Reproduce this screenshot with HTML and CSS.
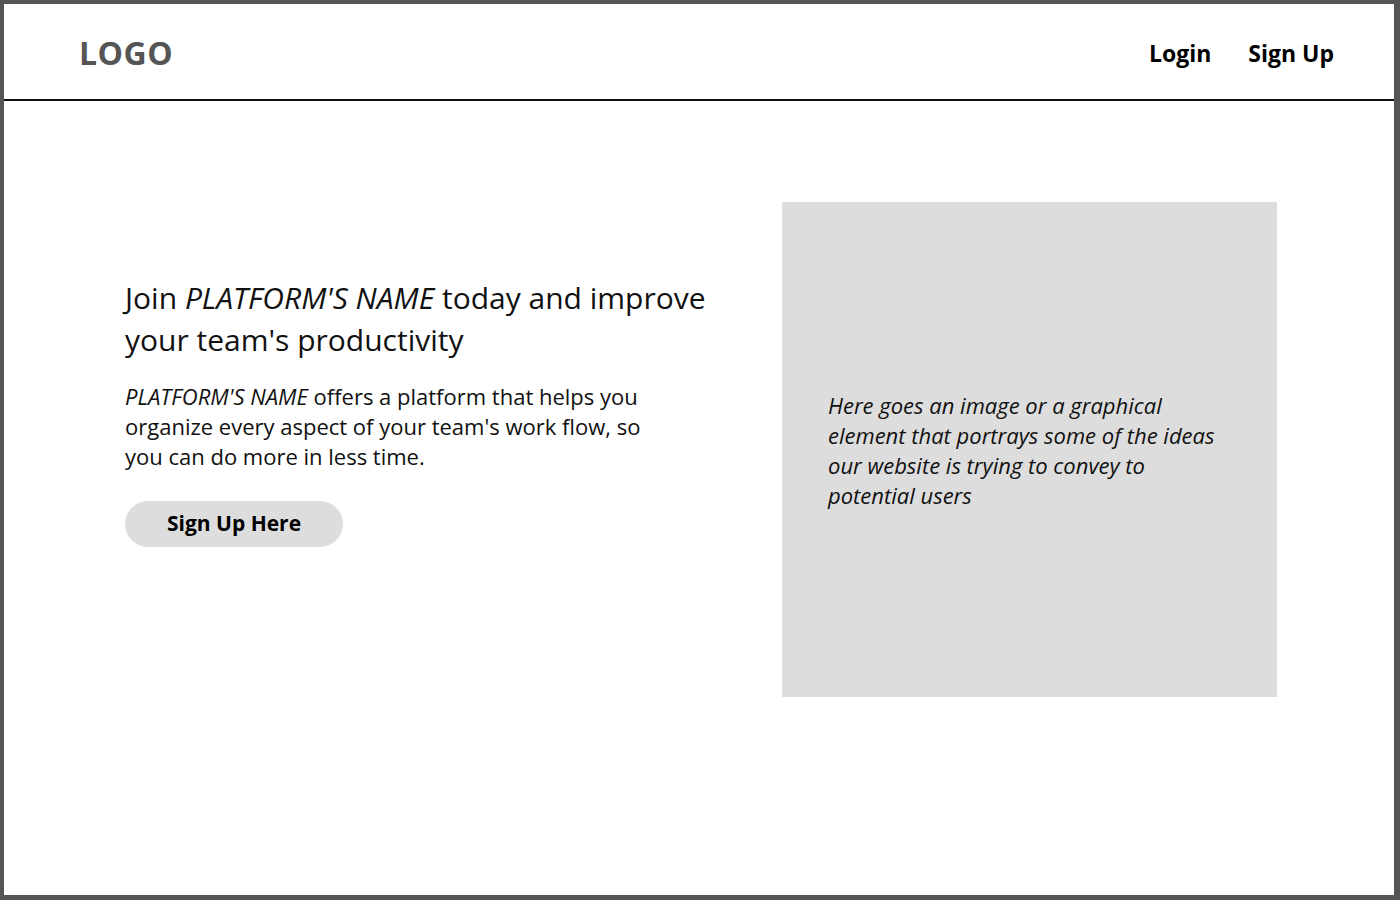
FILE: index.html
```html
<!DOCTYPE html>
<html lang="en">
<head>
<meta charset="utf-8">
<title>Landing</title>
<link rel="stylesheet" href="styles.css">
</head>
<body>
<div class="frame">
  <header class="header">
    <div class="logo">LOGO</div>
    <nav class="nav">
      <a class="nav-link" href="#">Login</a>
      <a class="nav-link" href="#">Sign Up</a>
    </nav>
  </header>
  <main class="hero">
    <section class="intro">
      <h1 class="title">Join <em>PLATFORM'S NAME</em> today and improve your team's productivity</h1>
      <p class="lead"><em>PLATFORM'S NAME</em> offers a platform that helps you organize every aspect of your team's work flow, so you can do more in less time.</p>
      <a class="cta" href="#">Sign Up Here</a>
    </section>
    <div class="visual">
      <p class="visual-text">Here goes an image or a graphical element that portrays some of the ideas our website is trying to convey to potential users</p>
    </div>
  </main>
</div>
</body>
</html>
```

FILE: styles.css
```css
* { box-sizing: border-box; }

html, body {
  margin: 0;
  padding: 0;
  background: #ffffff;
}

body {
  font-family: "Open Sans", "Liberation Sans", sans-serif;
  color: #111;
}

.frame {
  width: 1400px;
  height: 900px;
  border-style: solid;
  border-color: #555555;
  border-width: 4px 6px 5px 4px;
  background: #fff;
  display: flex;
  flex-direction: column;
}

.header {
  height: 97px;
  flex: none;
  display: flex;
  align-items: center;
  justify-content: space-between;
  padding: 2px 60px 0 75px;
  border-bottom: 2px solid #111;
}

.logo {
  font-size: 32px;
  font-weight: 700;
  color: #555555;
  letter-spacing: 0.5px;
}

.nav {
  display: flex;
  gap: 37px;
}

.nav-link {
  font-size: 23px;
  font-weight: 700;
  color: #000;
  text-decoration: none;
}

.hero {
  display: flex;
  align-items: flex-start;
  padding: 101px 0 0 121px;
}

.intro {
  width: 657px;
  margin-top: 75px;
}

.title {
  margin: 0;
  font-size: 30px;
  font-weight: 400;
  line-height: 42px;
  color: #111;
  width: 600px;
}

.title em, .lead em { font-style: italic; }

.lead {
  margin: 20px 0 30px;
  font-size: 22px;
  line-height: 30px;
  width: 540px;
  color: #111;
}

.cta {
  display: inline-flex;
  align-items: center;
  justify-content: center;
  width: 218px;
  height: 46px;
  padding-bottom: 3px;
  border-radius: 23px;
  background: #dddddd;
  color: #000;
  font-size: 21px;
  font-weight: 700;
  text-decoration: none;
}

.visual {
  width: 495px;
  height: 495px;
  background: #dddddd;
  display: flex;
  align-items: center;
  padding: 0 46px;
}

.visual-text {
  margin: 0;
  font-size: 22px;
  line-height: 30px;
  font-style: italic;
  color: #111;
}
```
